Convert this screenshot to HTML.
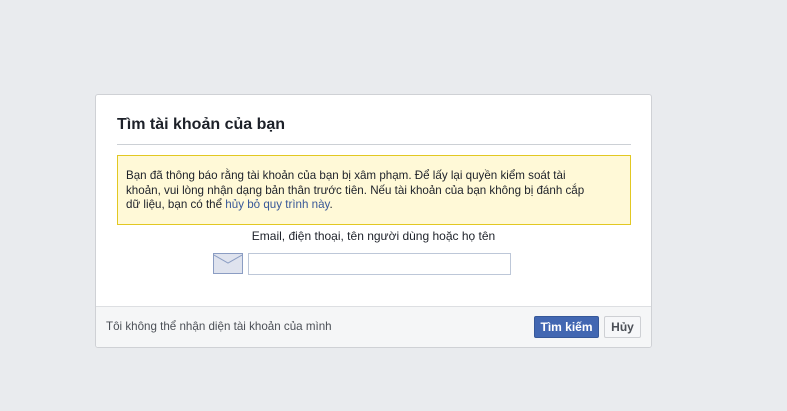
<!DOCTYPE html>
<html><head><meta charset="utf-8"><style>
body{margin:0;background:#e9ebee;font-family:"Liberation Sans",Arial,sans-serif;width:787px;height:411px;position:relative;overflow:hidden}
.card{position:absolute;left:95px;top:94px;width:555px;height:252px;background:#fff;border:1px solid #cfd1d5;border-radius:3px;overflow:hidden}
h2{position:absolute;left:21px;top:21px;margin:0;font-size:16px;font-weight:bold;color:#1d2129}
.hr{position:absolute;left:21px;top:49px;width:514px;height:1px;background:#ccd0d5}
.warn{position:absolute;left:21px;top:60px;width:496px;height:51px;background:#fff9d7;border:1px solid #e2c822;padding:13px 8px 4px;font-size:11.6px;line-height:14.5px;color:#1d2129;white-space:nowrap}
.warn a{color:#385898}
.lbl{position:absolute;left:0;width:555px;top:134px;text-align:center;font-size:12px;color:#1d2129}
.env{position:absolute;left:117px;top:158px;width:30px;height:21px;background:#dfe3ee;border:1px solid #8b9dc3;box-sizing:border-box}
.inp{position:absolute;left:152px;top:158px;width:263px;height:22px;border:1px solid #bdc7d8;box-sizing:border-box}
.foot{position:absolute;left:0;top:211px;width:555px;height:41px;background:#f5f6f7;border-top:1px solid #dddfe2}
.foot span{position:absolute;left:10px;top:13px;font-size:11.6px;color:#4b4f56}
.b1{position:absolute;left:438px;top:9px;width:65px;height:22px;background:#4267b2;border:1px solid #365899;box-sizing:border-box;color:#fff;font-weight:bold;font-size:12px;text-align:center;line-height:20px;border-radius:2px}
.b2{position:absolute;left:508px;top:9px;width:37px;height:22px;background:#f6f7f9;border:1px solid #ced0d4;box-sizing:border-box;color:#4b4f56;font-weight:bold;font-size:12px;text-align:center;line-height:20px;border-radius:2px}
</style></head><body>
<div class="card">
<h2>Tìm tài khoản của bạn</h2>
<div class="hr"></div>
<div class="warn">Bạn đã thông báo rằng tài khoản của bạn bị xâm phạm. Để lấy lại quyền kiểm soát tài<br>khoản, vui lòng nhận dạng bản thân trước tiên. Nếu tài khoản của bạn không bị đánh cắp<br>dữ liệu, bạn có thể <a>hủy bỏ quy trình này</a>.</div>
<div class="lbl">Email, điện thoại, tên người dùng hoặc họ tên</div>
<div class="env"><svg width="28" height="19" style="position:absolute;left:0;top:0"><path d="M0 1 L14 9 L28 1" fill="none" stroke="#8b9dc3" stroke-width="1"/></svg></div>
<div class="inp"></div>
<div class="foot"><span>Tôi không thể nhận diện tài khoản của mình</span><div class="b1">Tìm kiếm</div><div class="b2">Hủy</div></div>
</div>
</body></html>
